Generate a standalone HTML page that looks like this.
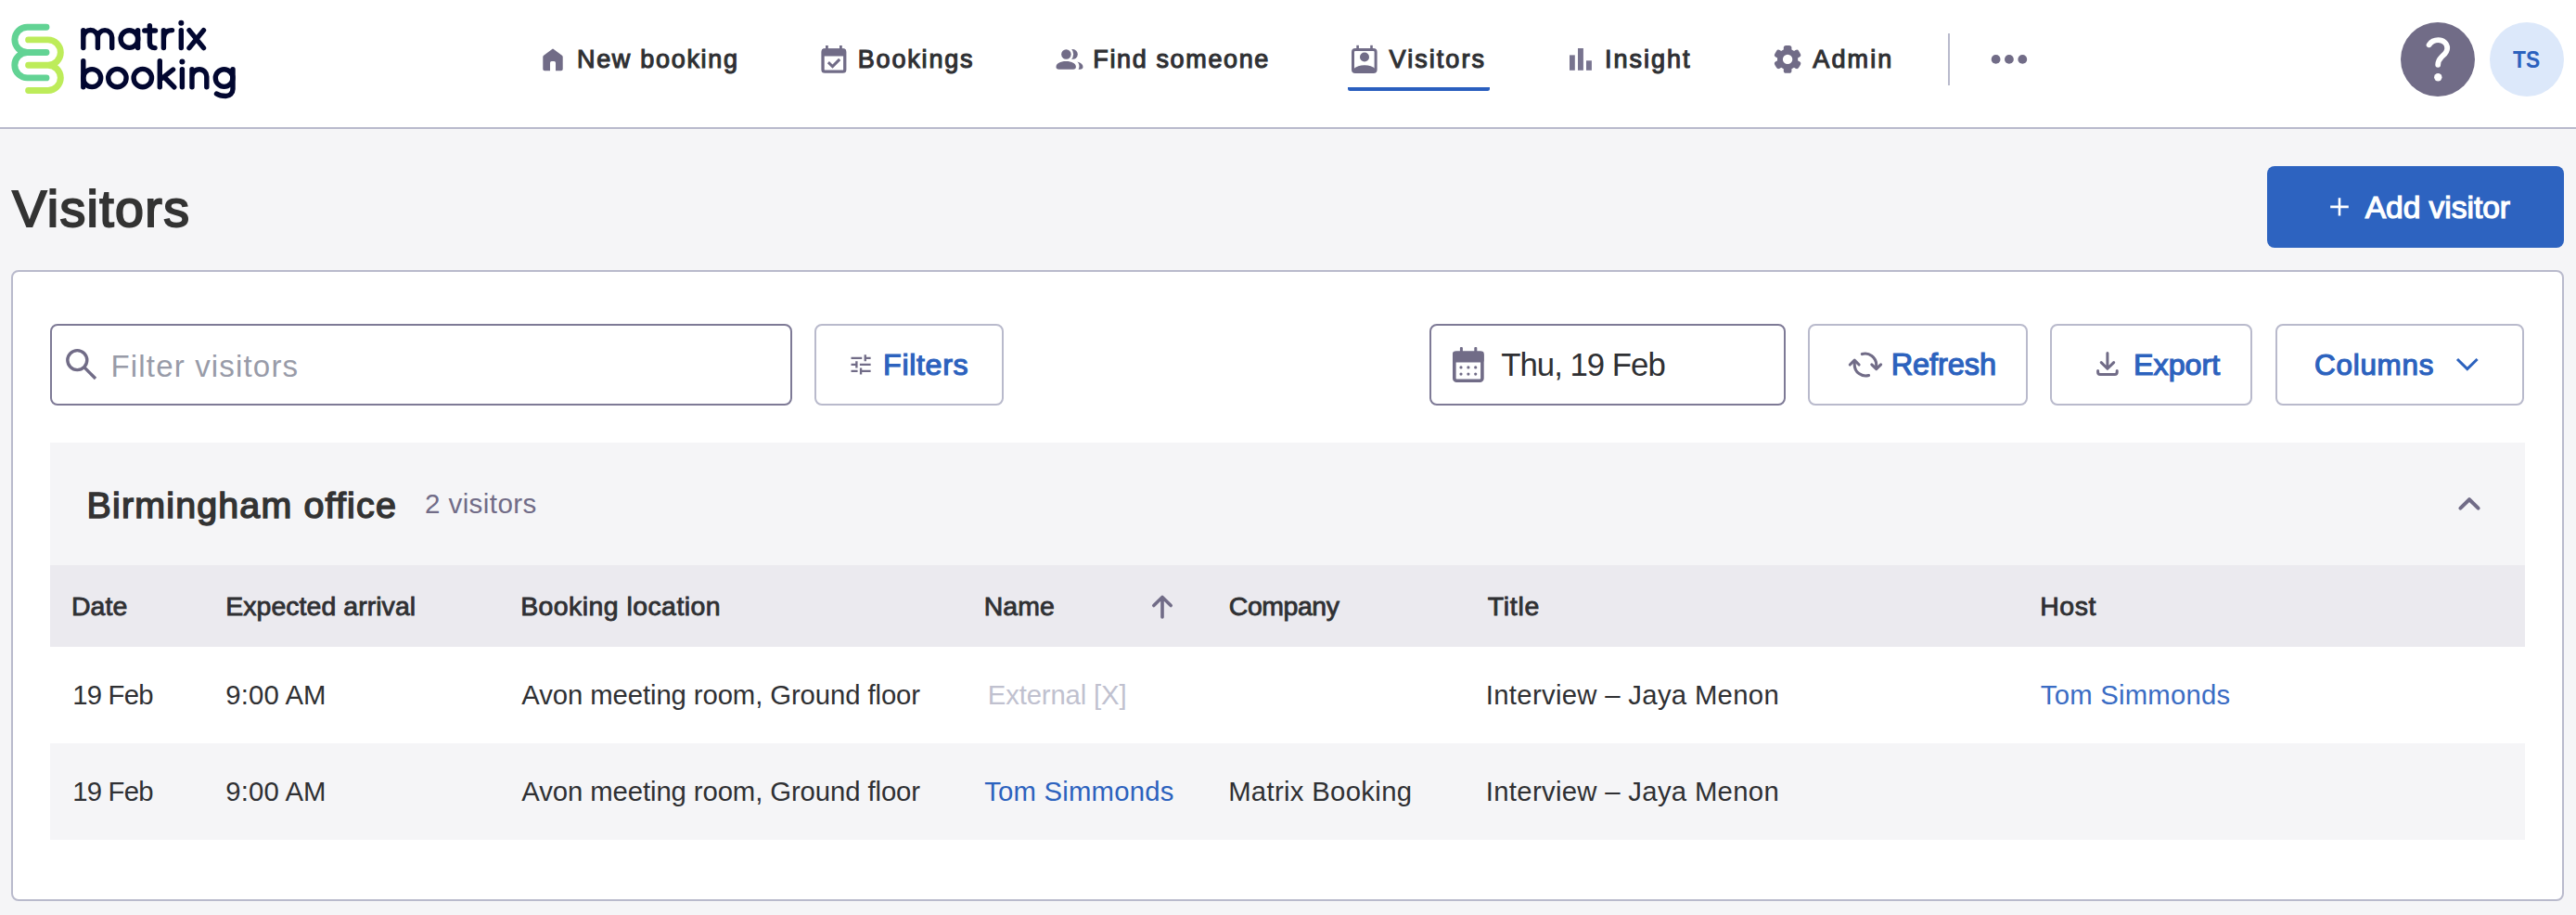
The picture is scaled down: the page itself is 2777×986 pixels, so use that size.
<!DOCTYPE html>
<html><head><meta charset="utf-8"><title>Visitors</title>
<style>
html,body{margin:0;padding:0;width:2777px;height:986px;overflow:hidden;background:#f5f5f7;}
.b{position:absolute;box-sizing:content-box}
.t{position:absolute;white-space:pre;font-family:"Liberation Sans",sans-serif;}
svg{position:absolute;left:0;top:0}
</style></head><body>

<div class="b" style="left:0;top:0;width:2777px;height:137px;background:#fff;border-bottom:2px solid #b9bacc"></div>
<div class="b" style="left:2444px;top:179px;width:320px;height:88px;background:#2d63c0;border-radius:8px"></div>
<div class="b" style="left:12px;top:291px;width:2748px;height:676px;background:#fff;border:2px solid #b9bacc;border-radius:8px"></div>
<div class="b" style="left:54px;top:349px;width:796px;height:84px;border:2px solid #7e7a96;border-radius:8px"></div>
<div class="b" style="left:878px;top:349px;width:200px;height:84px;border:2px solid #b9bacc;border-radius:8px"></div>
<div class="b" style="left:1541px;top:349px;width:380px;height:84px;border:2px solid #7e7a96;border-radius:8px"></div>
<div class="b" style="left:1949px;top:349px;width:233px;height:84px;border:2px solid #b9bacc;border-radius:8px"></div>
<div class="b" style="left:2210px;top:349px;width:214px;height:84px;border:2px solid #b9bacc;border-radius:8px"></div>
<div class="b" style="left:2453px;top:349px;width:264px;height:84px;border:2px solid #b9bacc;border-radius:8px"></div>
<div class="b" style="left:54px;top:477px;width:2668px;height:132px;background:#f5f5f7"></div>
<div class="b" style="left:54px;top:609px;width:2668px;height:88px;background:#ebeaef"></div>
<div class="b" style="left:54px;top:697px;width:2668px;height:104px;background:#fff"></div>
<div class="b" style="left:54px;top:801px;width:2668px;height:104px;background:#f5f5f7"></div>

<svg width="2777" height="986" viewBox="0 0 2777 986"><g fill="none" stroke-linecap="round" stroke-width="6.9">
<path stroke="#62d394" d="M50 29.2 H29.5 A13.65 13.65 0 0 0 29.5 56.5 H50 M29.5 56.5 A13.7 13.7 0 0 0 29.5 83.9 H50"/>
<path stroke="#bdec5a" d="M30.6 42.9 H51.7 A13.65 13.65 0 0 1 51.7 70.2 H30.6 M51.7 70.2 A13.65 13.65 0 0 1 51.7 97.5 H30.6"/>
</g><g fill="none" stroke="#020730" stroke-width="5.4" stroke-linecap="round" stroke-linejoin="round">
<path d="M89.8 51.6 V32.6 M89.8 40.3 A7.8 7.8 0 0 1 105.4 40.3 V51.6 M105.4 40.3 A7.65 7.65 0 0 1 120.7 40.3 V51.6"/>
<circle cx="139.4" cy="42.1" r="9.3"/><path d="M148.6 32.6 V51.6"/>
<path d="M155.8 33 H167.5 M161.4 27.6 V46 Q161.4 51.6 167 51.6"/>
<path d="M176.4 51.6 V32.6 M176.4 41 Q177 32.6 185.5 32.6"/>
<path d="M195.3 51.6 V32.6"/><circle cx="195.3" cy="24.8" r="3" fill="#020730" stroke="none"/>
<path d="M204 32.6 L219.5 51.6 M219.5 32.6 L204 51.6"/>
<path d="M89.8 65.8 V93.8"/><circle cx="99.2" cy="84.1" r="9.5"/>
<circle cx="126.4" cy="84.1" r="9.7"/>
<circle cx="153.8" cy="84.1" r="9.7"/>
<path d="M172.3 65.8 V93.8 M174.5 84.5 L186.5 75 M177 83 L187.8 93.8"/>
<path d="M196.4 93.8 V74.6"/><circle cx="196.4" cy="66.6" r="3" fill="#020730" stroke="none"/>
<path d="M207 93.8 V74.6 M207 82.6 A7.9 7.9 0 0 1 222.8 82.6 V93.8"/>
<circle cx="241.6" cy="84.1" r="9.3"/><path d="M251 74.6 V96 A7.5 7.5 0 0 1 243.5 103.5 Q237 103.5 233.5 101"/>
</g><path fill="#716c87" d="M595.2 52.9 Q596 52.2 596.8 52.9 L605.9 59.7 Q606.7 60.3 606.7 61.3 V74.5 Q606.7 76.3 604.9 76.3 H599 V67.8 Q599 66.1 597.3 66.1 H594.7 Q593 66.1 593 67.8 V76.3 H587.1 Q585.3 76.3 585.3 74.5 V61.3 Q585.3 60.3 586.1 59.7 Z"/><g fill="none" stroke="#716c87" stroke-width="3.3">
<rect x="887.05" y="53.85" width="23.7" height="23.3" rx="2.2"/></g>
<rect fill="#716c87" x="886" y="52.5" width="25.8" height="8" rx="2"/>
<rect fill="#716c87" x="890" y="49" width="2.8" height="5"/><rect fill="#716c87" x="905" y="49" width="2.8" height="5"/>
<path fill="none" stroke="#716c87" stroke-width="3" d="M892.9 67.2 L897.5 71.6 L905.2 63.9"/><g fill="#716c87"><circle cx="1156.5" cy="58.4" r="5.3"/></g><circle cx="1148.4" cy="58.4" r="8.7" fill="#fff"/>
<g fill="#716c87"><circle cx="1149.4" cy="58.5" r="5.25"/>
<path d="M1138.5 72 C1138.5 68.5 1143 66 1149.2 66 C1155.4 66 1159.9 68.5 1159.9 72 C1159.9 74 1158.8 74.7 1157 74.7 H1141.4 C1139.6 74.7 1138.5 74 1138.5 72 Z"/>
<path d="M1161.3 66.4 C1165.5 67.5 1167.5 69.5 1167.5 72 C1167.5 73.8 1166.3 74.7 1164.5 74.7 H1162.6 C1163.4 73 1163.6 71.5 1163.3 70 C1163 68.5 1162.4 67.3 1161.3 66.4 Z"/></g><g fill="none" stroke="#716c87" stroke-width="3"><rect x="1458.5" y="53.4" width="24.6" height="24.1" rx="2.5"/></g>
<g fill="#716c87"><rect x="1462.3" y="48.8" width="2.6" height="5"/><rect x="1477.2" y="48.8" width="2.6" height="5"/>
<circle cx="1471" cy="61.5" r="5"/><path d="M1459.5 77.5 V74 C1462 71.5 1466 70.2 1471 70.2 C1476 70.2 1480 71.5 1482.5 74 V77.5 Z"/></g><g fill="#78748f"><rect x="1692" y="59.4" width="5.8" height="16.4"/><rect x="1701" y="52" width="5.9" height="23.8"/><rect x="1710" y="65.3" width="5.9" height="10.5"/></g><g fill="#716c87" transform="translate(1927.1 63.9)"><circle r="11.1"/><rect x="-4.3" y="-14.9" width="8.6" height="8" rx="2.6" transform="rotate(0)"/><rect x="-4.3" y="-14.9" width="8.6" height="8" rx="2.6" transform="rotate(60)"/><rect x="-4.3" y="-14.9" width="8.6" height="8" rx="2.6" transform="rotate(120)"/><rect x="-4.3" y="-14.9" width="8.6" height="8" rx="2.6" transform="rotate(180)"/><rect x="-4.3" y="-14.9" width="8.6" height="8" rx="2.6" transform="rotate(240)"/><rect x="-4.3" y="-14.9" width="8.6" height="8" rx="2.6" transform="rotate(300)"/></g><circle cx="1927.1" cy="63.9" r="5.2" fill="#fff"/><rect x="2100" y="36" width="2" height="56" fill="#b9bacc"/>
<g fill="#716c87"><circle cx="2151.6" cy="63.9" r="4.9"/><circle cx="2165.9" cy="63.9" r="4.9"/><circle cx="2180.3" cy="63.9" r="4.9"/></g><circle cx="2628" cy="64" r="40" fill="#716c87"/>
<path fill="none" stroke="#fff" stroke-width="5.8" stroke-linecap="round" d="M2618.6 48.3 C2621 44.8 2624.5 43.2 2628.5 43.2 C2634 43.2 2638.2 47 2638.2 52 C2638.2 56.5 2635 58.5 2632 61.5 C2629.5 64 2628.2 66 2628.2 69.8"/>
<circle cx="2628.3" cy="83.2" r="4.2" fill="#fff"/>
<circle cx="2724" cy="64" r="40" fill="#dce8fa"/><path fill="#2a5fbf" d="M1453 94 H1606 V95.5 A2.5 2.5 0 0 1 1603.5 98 H1455.5 A2.5 2.5 0 0 1 1453 95.5 Z"/><path fill="none" stroke="#fff" stroke-width="2.6" d="M2522 213.3 V232.5 M2512.2 222.9 H2531.8"/><g fill="none" stroke="#716c87" stroke-width="3.4"><circle cx="83.3" cy="388.1" r="10.5"/><path d="M90.9 395.9 L103 408"/></g><path fill="#716c87" transform="translate(914 378.8) scale(1.172)" d="M3 17v2h6v-2H3zM3 5v2h10V5H3zm10 16v-2h8v-2h-8v-2h-2v6h2zM7 9v2H3v2h4v2h2V9H7zm14 4v-2H11v2h10zm-6-4h2V7h4V5h-4V3h-2v6z"/><rect x="1567.8" y="380.3" width="30.1" height="30" rx="2.5" fill="none" stroke="#716c87" stroke-width="3.6"/>
<g fill="#716c87"><rect x="1566" y="378.5" width="33.7" height="12" rx="2.5"/><rect x="1573.9" y="374" width="3" height="6" rx="1"/><rect x="1589.3" y="374" width="3" height="6" rx="1"/><circle cx="1575" cy="395.9" r="1.6"/><circle cx="1582.9" cy="395.9" r="1.6"/><circle cx="1590.7" cy="395.9" r="1.6"/><circle cx="1575" cy="403.1" r="1.6"/><circle cx="1582.9" cy="403.1" r="1.6"/><circle cx="1590.7" cy="403.1" r="1.6"/></g><g fill="none" stroke="#716c87" stroke-width="3.1" stroke-linecap="round" stroke-linejoin="round">
<path d="M2007.3 381.6 A12 12 0 0 1 2022.7 393 V396"/><path d="M2017.8 392.9 L2022.7 397.6 L2027.6 392.9"/>
<path d="M2014.6 404.5 A12 12 0 0 1 1999.2 393 V390"/><path d="M1994.3 393 L1999.2 388.2 L2004.1 393"/></g><g fill="none" stroke="#716c87" stroke-width="3" stroke-linecap="round" stroke-linejoin="round">
<path d="M2271.9 380.5 V396.5 M2265.2 390.6 L2271.9 397.3 L2278.7 390.6"/>
<path d="M2261.6 399.5 V401 Q2261.6 403.4 2264 403.4 H2279.8 Q2282.2 403.4 2282.2 401 V399.5"/></g><path fill="none" stroke="#2c62be" stroke-width="3" d="M2649 387 L2659.8 397.6 L2670.6 387"/><path fill="none" stroke="#716c87" stroke-width="4" stroke-linecap="round" stroke-linejoin="round" d="M2652.4 547.6 L2662 538.2 L2671.6 547.6"/><path fill="none" stroke="#716c87" stroke-width="3.6" stroke-linecap="round" stroke-linejoin="round" d="M1253 644 V665 M1243.8 652.6 L1253 643.4 L1262.2 652.6"/></svg>
<div class='t' style='left:621.94px;top:51.17px;font-size:27.02px;line-height:27.02px;letter-spacing:1.694px;color:#2f3033;font-weight:normal;-webkit-text-stroke:1.1px #2f3033;'>New booking</div>
<div class='t' style='left:924.74px;top:51.17px;font-size:27.02px;line-height:27.02px;letter-spacing:1.813px;color:#2f3033;font-weight:normal;-webkit-text-stroke:1.1px #2f3033;'>Bookings</div>
<div class='t' style='left:1178.34px;top:51.17px;font-size:27.02px;line-height:27.02px;letter-spacing:1.621px;color:#2f3033;font-weight:normal;-webkit-text-stroke:1.1px #2f3033;'>Find someone</div>
<div class='t' style='left:1497.61px;top:51.17px;font-size:27.02px;line-height:27.02px;letter-spacing:2.035px;color:#2f3033;font-weight:normal;-webkit-text-stroke:1.1px #2f3033;'>Visitors</div>
<div class='t' style='left:1729.95px;top:51.17px;font-size:27.02px;line-height:27.02px;letter-spacing:1.99px;color:#2f3033;font-weight:normal;-webkit-text-stroke:1.1px #2f3033;'>Insight</div>
<div class='t' style='left:1954.36px;top:51.17px;font-size:27.02px;line-height:27.02px;letter-spacing:2.076px;color:#2f3033;font-weight:normal;-webkit-text-stroke:1.1px #2f3033;'>Admin</div>
<div class='t' style='left:2709.03px;top:51.8px;font-size:24.96px;line-height:24.96px;letter-spacing:0px;color:#2c62be;font-weight:bold;transform:scaleX(0.9119);transform-origin:0 0;'>TS</div>
<div class='t' style='left:13.37px;top:197.9px;font-size:55.59px;line-height:55.59px;letter-spacing:1.343px;color:#333333;font-weight:normal;-webkit-text-stroke:2.0px #333333;'>Visitors</div>
<div class='t' style='left:2549.71px;top:206.77px;font-size:33.68px;line-height:33.68px;letter-spacing:-0.088px;color:#ffffff;font-weight:normal;-webkit-text-stroke:1.2px #ffffff;'>Add visitor</div>
<div class='t' style='left:119.48px;top:377.8px;font-size:33.07px;line-height:33.07px;letter-spacing:1.15px;color:#989ba8;font-weight:normal;'>Filter visitors</div>
<div class='t' style='left:952.09px;top:377.37px;font-size:32.23px;line-height:32.23px;letter-spacing:0.638px;color:#2c62be;font-weight:normal;-webkit-text-stroke:1.2px #2c62be;'>Filters</div>
<div class='t' style='left:1618.24px;top:375.9px;font-size:34.78px;line-height:34.78px;letter-spacing:-0.995px;color:#2f3033;font-weight:normal;'>Thu, 19 Feb</div>
<div class='t' style='left:2038.69px;top:377.37px;font-size:32.52px;line-height:32.52px;letter-spacing:-0.087px;color:#2c62be;font-weight:normal;-webkit-text-stroke:1.2px #2c62be;'>Refresh</div>
<div class='t' style='left:2299.99px;top:377.37px;font-size:32.23px;line-height:32.23px;letter-spacing:0.028px;color:#2c62be;font-weight:normal;-webkit-text-stroke:1.2px #2c62be;'>Export</div>
<div class='t' style='left:2495.1px;top:378.47px;font-size:31.42px;line-height:31.42px;letter-spacing:0.721px;color:#2c62be;font-weight:normal;-webkit-text-stroke:1.2px #2c62be;'>Columns</div>
<div class='t' style='left:93.6px;top:524.62px;font-size:39.42px;line-height:39.42px;letter-spacing:1.16px;color:#333333;font-weight:normal;-webkit-text-stroke:1.5px #333333;'>Birmingham office</div>
<div class='t' style='left:457.99px;top:528.0px;font-size:29.6px;line-height:29.6px;letter-spacing:0.395px;color:#716c87;font-weight:normal;'>2 visitors</div>
<div class='t' style='left:76.98px;top:638.67px;font-size:28.45px;line-height:28.45px;letter-spacing:0.054px;color:#2f3033;font-weight:normal;-webkit-text-stroke:0.85px #2f3033;'>Date</div>
<div class='t' style='left:243.18px;top:638.67px;font-size:28.45px;line-height:28.45px;letter-spacing:0.068px;color:#2f3033;font-weight:normal;-webkit-text-stroke:0.85px #2f3033;'>Expected arrival</div>
<div class='t' style='left:561.18px;top:638.67px;font-size:28.45px;line-height:28.45px;letter-spacing:0.448px;color:#2f3033;font-weight:normal;-webkit-text-stroke:0.85px #2f3033;'>Booking location</div>
<div class='t' style='left:1060.68px;top:638.67px;font-size:28.45px;line-height:28.45px;letter-spacing:0.088px;color:#2f3033;font-weight:normal;-webkit-text-stroke:0.85px #2f3033;'>Name</div>
<div class='t' style='left:1324.79px;top:638.67px;font-size:28.45px;line-height:28.45px;letter-spacing:-0.438px;color:#2f3033;font-weight:normal;-webkit-text-stroke:0.85px #2f3033;'>Company</div>
<div class='t' style='left:1603.74px;top:638.67px;font-size:28.45px;line-height:28.45px;letter-spacing:0.751px;color:#2f3033;font-weight:normal;-webkit-text-stroke:0.85px #2f3033;'>Title</div>
<div class='t' style='left:2199.28px;top:638.67px;font-size:28.45px;line-height:28.45px;letter-spacing:0.565px;color:#2f3033;font-weight:normal;-webkit-text-stroke:0.85px #2f3033;'>Host</div>
<div class='t' style='left:78.14px;top:733.8px;font-size:29.31px;line-height:29.31px;letter-spacing:-0.765px;color:#2f3033;font-weight:normal;'>19 Feb</div>
<div class='t' style='left:243.36px;top:733.8px;font-size:29.31px;line-height:29.31px;letter-spacing:0.097px;color:#2f3033;font-weight:normal;'>9:00 AM</div>
<div class='t' style='left:562.34px;top:733.8px;font-size:29.31px;line-height:29.31px;letter-spacing:-0.097px;color:#2f3033;font-weight:normal;'>Avon meeting room, Ground floor</div>
<div class='t' style='left:1601.79px;top:733.8px;font-size:29.31px;line-height:29.31px;letter-spacing:0.311px;color:#2f3033;font-weight:normal;'>Interview – Jaya Menon</div>
<div class='t' style='left:78.14px;top:837.8px;font-size:29.31px;line-height:29.31px;letter-spacing:-0.765px;color:#2f3033;font-weight:normal;'>19 Feb</div>
<div class='t' style='left:243.36px;top:837.8px;font-size:29.31px;line-height:29.31px;letter-spacing:0.097px;color:#2f3033;font-weight:normal;'>9:00 AM</div>
<div class='t' style='left:562.34px;top:837.8px;font-size:29.31px;line-height:29.31px;letter-spacing:-0.097px;color:#2f3033;font-weight:normal;'>Avon meeting room, Ground floor</div>
<div class='t' style='left:1601.79px;top:837.8px;font-size:29.31px;line-height:29.31px;letter-spacing:0.311px;color:#2f3033;font-weight:normal;'>Interview – Jaya Menon</div>
<div class='t' style='left:1064.75px;top:733.8px;font-size:29.31px;line-height:29.31px;letter-spacing:-0.14px;color:#c0c1cf;font-weight:normal;'>External [X]</div>
<div class='t' style='left:2199.84px;top:733.8px;font-size:29.31px;line-height:29.31px;letter-spacing:0.217px;color:#3a6cc4;font-weight:normal;'>Tom Simmonds</div>
<div class='t' style='left:1061.14px;top:837.8px;font-size:29.31px;line-height:29.31px;letter-spacing:0.208px;color:#2c62be;font-weight:normal;'>Tom Simmonds</div>
<div class='t' style='left:1324.15px;top:837.8px;font-size:29.31px;line-height:29.31px;letter-spacing:0.318px;color:#2f3033;font-weight:normal;'>Matrix Booking</div>
</body></html>
